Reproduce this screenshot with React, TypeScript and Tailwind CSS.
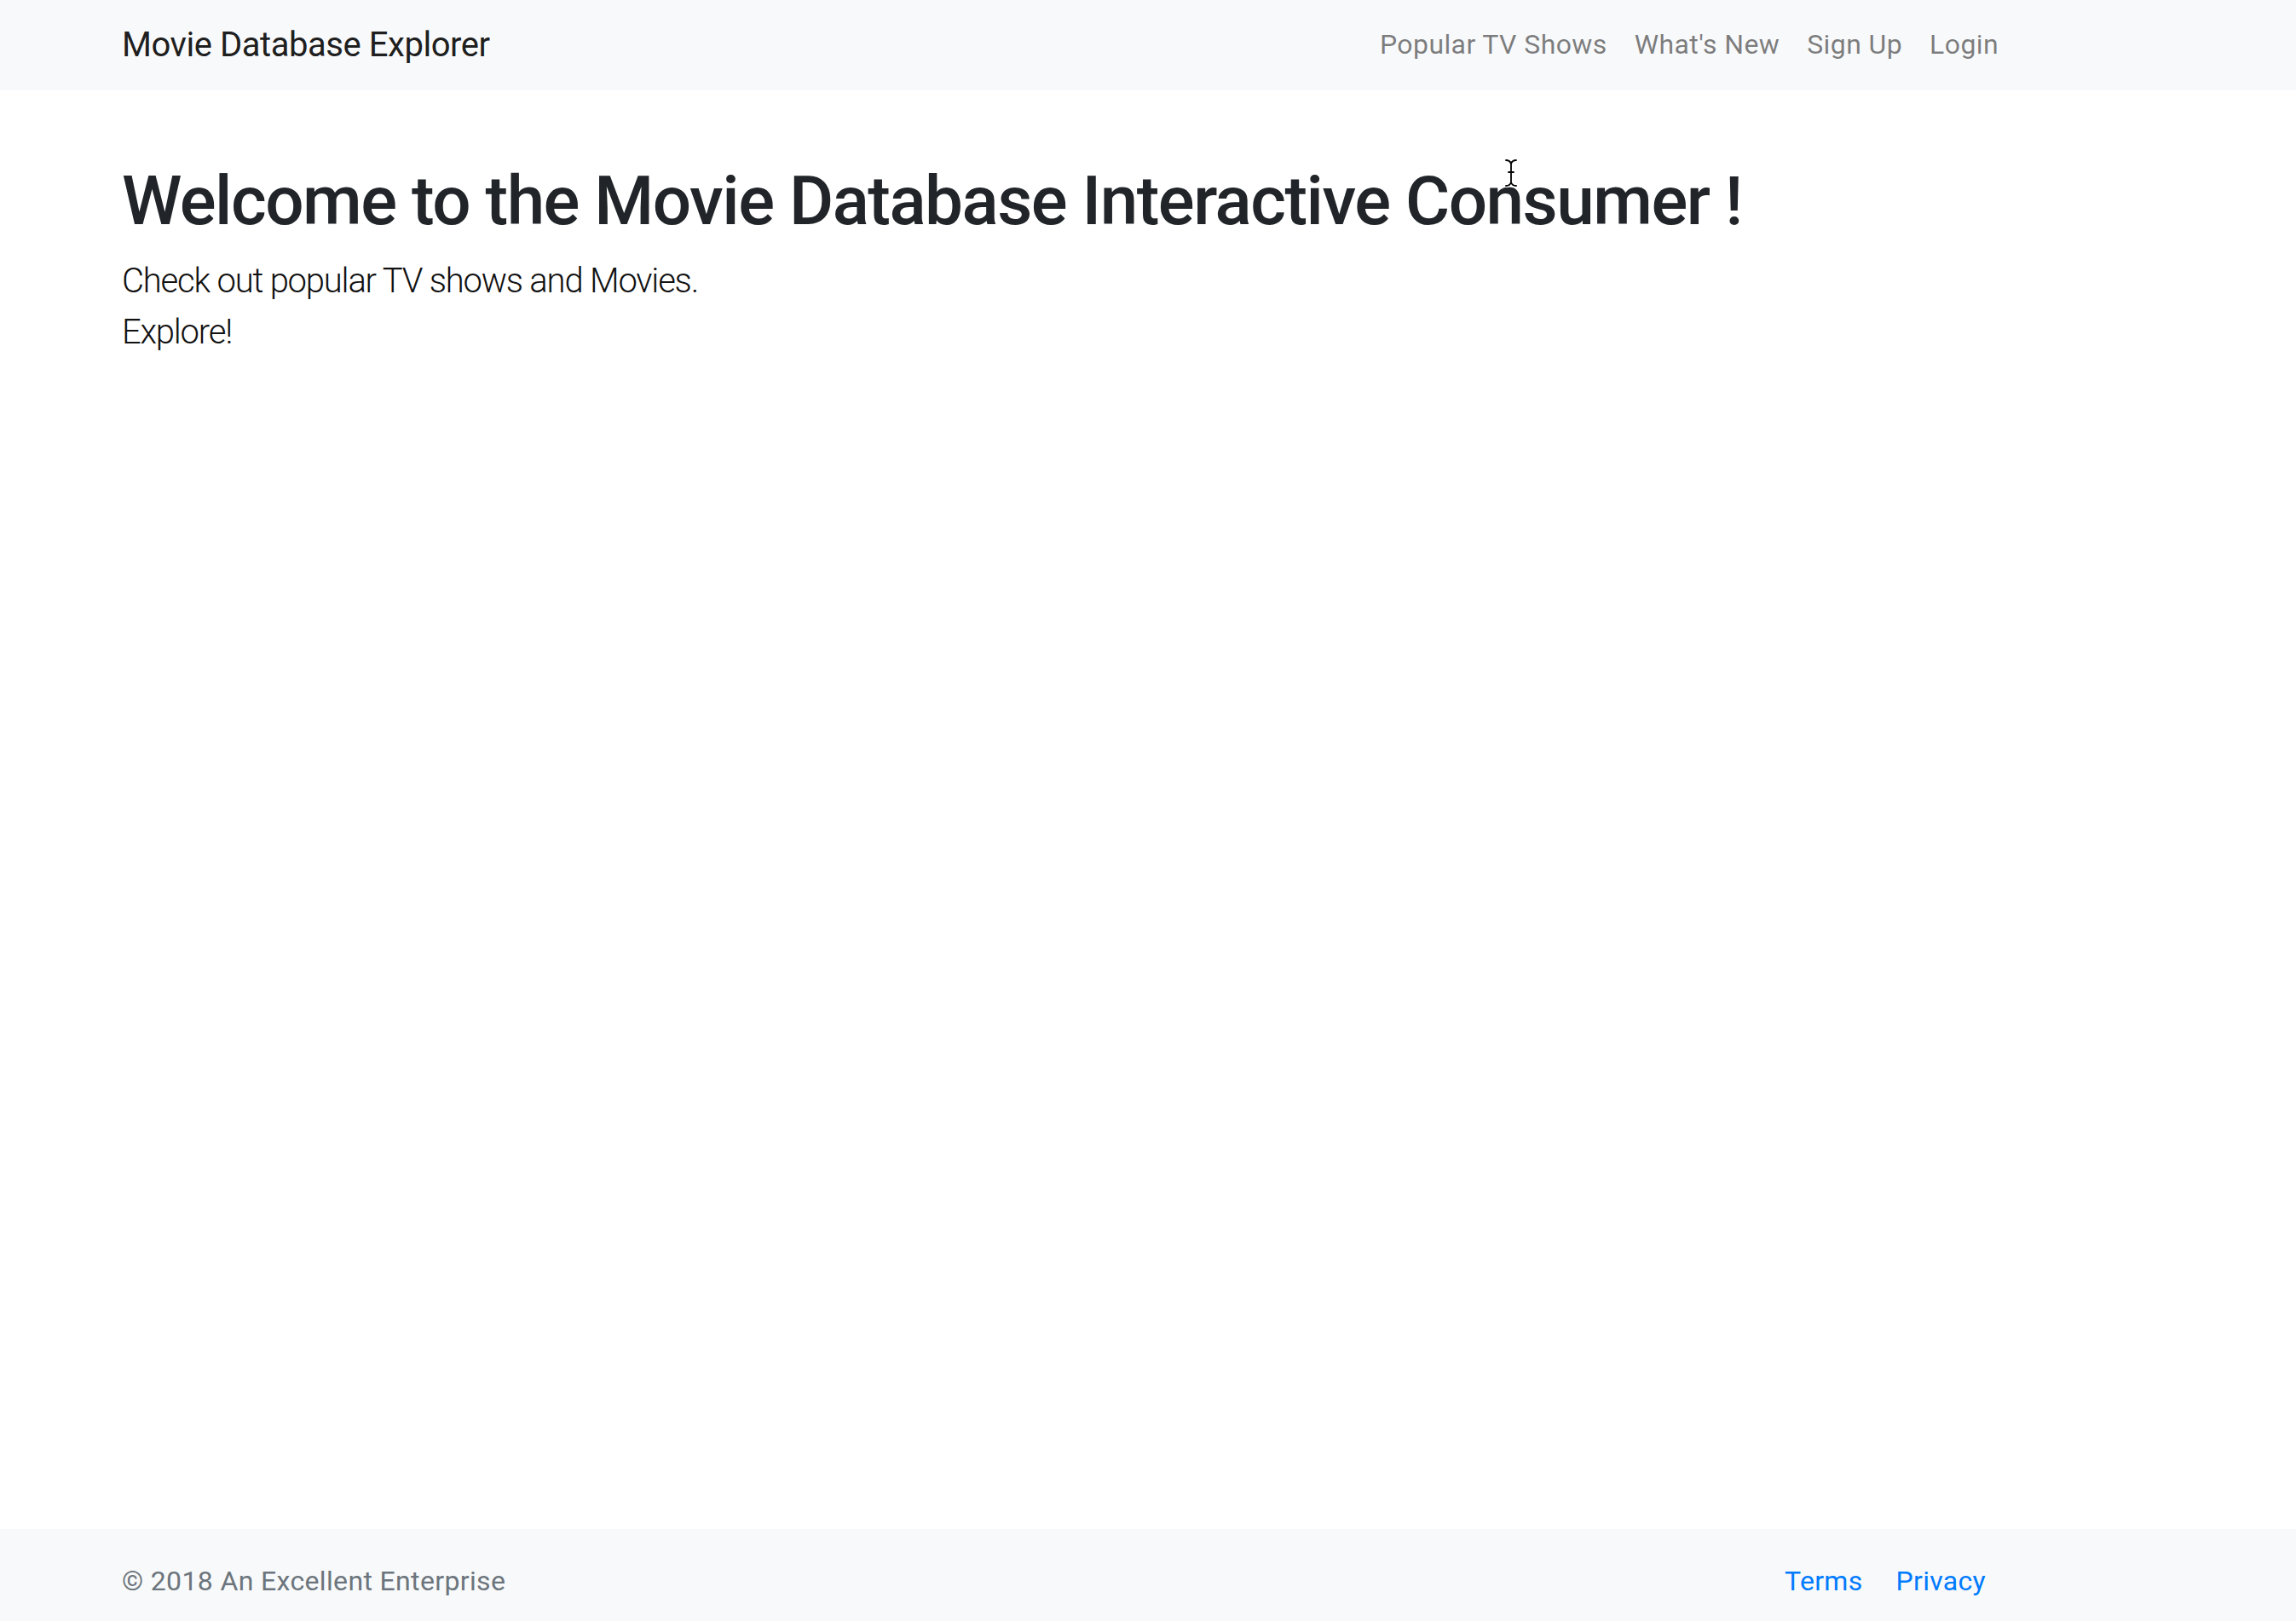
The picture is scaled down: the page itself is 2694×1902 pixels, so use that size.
import React from "react";

function IBeam() {
  return (
    <svg
      className="absolute left-[1764px] top-[186px]"
      width="18"
      height="34"
      viewBox="0 0 18 34"
      fill="none"
    >
      <path
        d="M3 2 C6 2 8 3 9 6 C10 3 12 2 15 2 M9 6 V28 M6 16 H12 M3 32 C6 32 8 31 9 28 C10 31 12 32 15 32"
        stroke="#ffffff"
        strokeWidth="4"
        strokeLinecap="round"
      />
      <path
        d="M3 2 C6 2 8 3 9 6 C10 3 12 2 15 2 M9 6 V28 M6 16 H12 M3 32 C6 32 8 31 9 28 C10 31 12 32 15 32"
        stroke="#000000"
        strokeWidth="1.8"
        strokeLinecap="round"
      />
    </svg>
  );
}

export default function App() {
  const font = { fontFamily: 'Roboto, "Noto Sans", "Liberation Sans", sans-serif' };
  return (
    <div
      className="relative flex flex-col h-[1902px] w-full bg-white text-[#212529]"
      style={font}
    >
      <nav className="flex items-center justify-between h-[106px] bg-[#f8f9fa] pl-[143px] pr-[333px] shrink-0">
        <a className="text-[40px] leading-[60px] text-[rgba(0,0,0,0.9)] tracking-[-0.45px]">
          Movie Database Explorer
        </a>
        <ul className="flex items-center -mt-[3px]">
          {["Popular TV Shows", "What's New", "Sign Up", "Login"].map((t) => (
            <li key={t}>
              <a className="block px-[16px] py-[16px] text-[32px] leading-[48px] text-[rgba(0,0,0,0.5)] tracking-[0.4px]">
                {t}
              </a>
            </li>
          ))}
        </ul>
      </nav>

      <main className="flex-1 pl-[143px] pt-[82px]">
        <h1 className="text-[80px] leading-[96px] font-medium text-[#212529] mb-[16px] tracking-[-1.5px]">
          Welcome to the Movie Database Interactive Consumer !
        </h1>
        <p className="text-[40px] leading-[60px] font-light text-[#111111] tracking-[-1.2px]">
          Check out popular TV shows and Movies.
          <br />
          Explore!
        </p>
      </main>

      <footer className="flex items-center justify-between h-[108px] bg-[#f8f9fa] pl-[143px] pr-[364px] pt-[14px] shrink-0">
        <p className="text-[32px] leading-[48px] text-[#6c757d] tracking-[0.35px]">
          © 2018 An Excellent Enterprise
        </p>
        <ul className="flex items-center gap-[39px]">
          <li>
            <a className="text-[32px] leading-[48px] text-[#007bff] tracking-[0.3px]">Terms</a>
          </li>
          <li>
            <a className="text-[32px] leading-[48px] text-[#007bff] tracking-[0.3px]">Privacy</a>
          </li>
        </ul>
      </footer>

      <IBeam />
    </div>
  );
}
